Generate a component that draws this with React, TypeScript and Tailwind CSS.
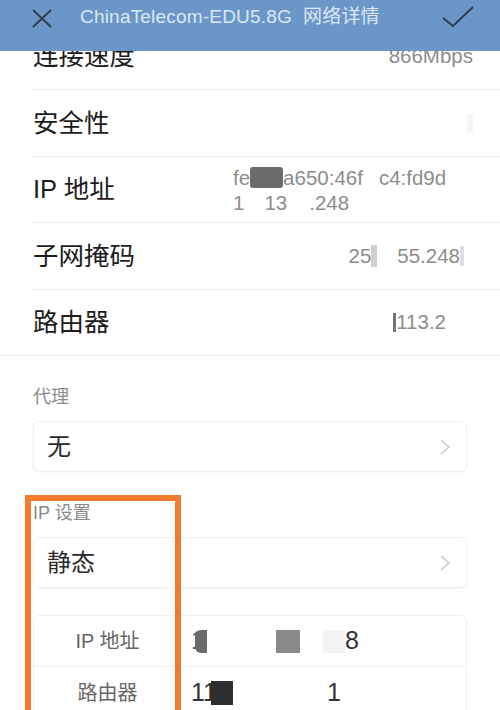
import React from 'react';

const font = { fontFamily: '"Liberation Sans", "Noto Sans CJK SC", sans-serif' };

function Chevron() {
  return (
    <svg width="12" height="18" viewBox="0 0 12 18" fill="none">
      <polyline points="2,2 10,9 2,16" stroke="#c4c4c4" strokeWidth="1.3" />
    </svg>
  );
}

function Row({ label, h, children, full }: { label: string; h: string; children?: React.ReactNode; full?: boolean }) {
  return (
    <div className={`${h} flex items-center pr-[27px] ${full ? '' : 'ml-[32px]'} border-b border-[#ececec]`}>
      <span className={`text-[25.5px] text-[#1c1c1c] ${full ? 'pl-[33px]' : 'pl-px'}`}>{label}</span>
      <div className="flex-1 flex justify-end text-[20.5px] text-[#8c8c8c]">{children}</div>
    </div>
  );
}

function Box({ text }: { text: string }) {
  return (
    <div className="mx-[33px] h-[51px] rounded-[6px] border border-[#efefef] shadow-[0_1px_2px_rgba(0,0,0,0.03)] flex items-center justify-between pl-[13px] pr-[15px]">
      <span className="text-[24px] text-[#2a2a2a]">{text}</span>
      <Chevron />
    </div>
  );
}

export default function App() {
  return (
    <div className="relative w-[500px] h-[710px] overflow-hidden bg-white" style={font}>
      {/* top bar sits over the scrolled list */}
      <div className="absolute top-0 left-0 right-0 h-[51px] bg-[#6a97c8] z-10 flex items-start pt-[5px]">
        <svg width="22" height="20" viewBox="0 0 22 20" className="ml-[31px] mt-[4px]">
          <path d="M2 1 L20 18 M20 1 L2 18" stroke="#2d3b4d" strokeWidth="1.8" />
        </svg>
        <span className="ml-[27px] text-[19px] text-[#dbe7f4] leading-[24px] tracking-[0.2px]">ChinaTelecom-EDU5.8G&nbsp;&nbsp;网络详情</span>
        <svg width="32" height="22" viewBox="0 0 32 22" className="ml-auto mr-[26px] mt-[1px]">
          <path d="M1 12 L11 20 L31 1" stroke="#2d3b4d" strokeWidth="1.8" fill="none" />
        </svg>
      </div>

      <div className="pt-[24px]">
        <Row label="连接速度" h="h-[66px]">
          <span>866Mbps</span>
        </Row>
        <Row label="安全性" h="h-[67px]">
          <span className="w-[6px] h-[18px] bg-[#f5f5f5]" />
        </Row>
        <Row label="IP 地址" h="h-[66px]">
          <div className="w-[240px] text-[20.5px] leading-[25px] text-[#8c8c8c]">
            <div className="flex items-center">
              fe<span className="inline-block w-[33px] h-[21px] bg-[#6a6a6a] rounded-[3px]" />a650:46f<span className="inline-block w-[16px]" />c4:fd9d
            </div>
            <div className="flex items-center">
              1<span className="inline-block w-[20px]" />13<span className="inline-block w-[22px]" />.248
            </div>
          </div>
        </Row>
        <Row label="子网掩码" h="h-[67px]">
          <span className="flex items-center pr-[9px]">
            25<span className="inline-block w-[6px] h-[22px] bg-[#cfcfcf] mr-[20px]" />55.248<span className="inline-block w-[4px] h-[20px] bg-[#dedede]" />
          </span>
        </Row>
        <Row label="路由器" h="h-[66px]" full>
          <span className="flex items-center pr-[27px]">
            <span className="inline-block w-[3px] h-[19px] bg-[#777]" />113.2
          </span>
        </Row>

        <div className="pl-[33px] pt-[29px] pb-[12px] text-[18px] text-[#8a8a8a] leading-[24px]">代理</div>
        <Box text="无" />

        <div className="pl-[33px] pt-[29px] pb-[12px] text-[18px] text-[#8a8a8a] leading-[24px]">IP 设置</div>
        <Box text="静态" />

        <div className="mx-[33px] mt-[27px] rounded-[6px] border border-[#efefef]">
          <div className="h-[51px] flex items-center border-b border-[#efefef]">
            <span className="w-[147px] text-center text-[20px] text-[#666]">IP 地址</span>
            <div className="flex items-center pl-[10px] text-[25px] text-[#333]">
              <span className="w-[4px] text-[#555]">1</span>
              <span className="inline-block w-[12px] h-[23px] bg-[#6b6b6b] rounded-l-[6px]" />
              <span className="inline-block w-[24px] h-[23px] bg-[#8a8a8a] ml-[69px]" />
              <span className="inline-block w-[22px] h-[23px] bg-[#f3f3f3] ml-[23px]" />
              <span>8</span>
            </div>
          </div>
          <div className="h-[51px] flex items-center">
            <span className="w-[147px] text-center text-[20px] text-[#666]">路由器</span>
            <div className="flex items-center pl-[10px] text-[25px] text-[#333]">
              11<span className="inline-block w-[22px] h-[24px] bg-[#2e2e2e] -ml-[6px]" />
              <span className="ml-[94px]">1</span>
            </div>
          </div>
        </div>
      </div>

      {/* orange highlight annotation */}
      <div className="absolute left-[25px] top-[495px] w-[156px] h-[230px] border-[6px] border-[#f27a2e]" />
    </div>
  );
}
